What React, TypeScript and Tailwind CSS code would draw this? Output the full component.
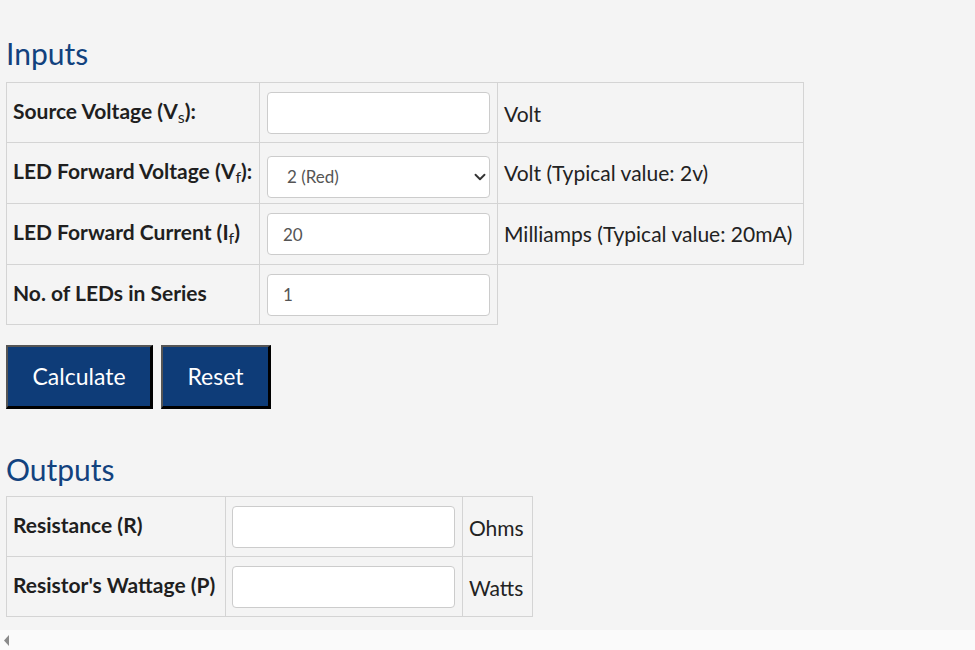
import { ChevronDown } from 'lucide-react';

const font = { fontFamily: 'Lato, "Noto Sans", sans-serif' };

const cell = 'border border-[#d4d4d4] align-middle';
const label = 'pl-[6px] pr-[5px] pb-[4px] text-[21px] font-bold text-[#1f1f1f] whitespace-nowrap';
const unit = 'px-[6px] text-[21px] text-[#222] whitespace-nowrap';
const field = 'block h-[42px] w-[223px] rounded-[4px] border border-[#cccccc] bg-white px-[15px] text-[17px] text-[#555]';

const Sub = ({ children }: { children: string }) => (
  <span className="inline-block text-[16px] font-normal leading-none translate-y-[4px]">{children}</span>
);

export default function App() {
  return (
    <div className="min-h-[650px] w-[975px] bg-[#f4f4f4] flex flex-col" style={font}>
      <div className="flex-1 pl-[6px]">
        <h2 className="mt-[35px] mb-[11px] text-[30px] leading-[36px] text-[#12427e]">Inputs</h2>

        <table className="border-collapse">
          <tbody>
            <tr className="h-[60px]">
              <td className={`${cell} ${label} w-[253px]`}>
                Source Voltage (V<Sub>s</Sub>):
              </td>
              <td className={`${cell} pl-[7px] pr-[7px] w-[238px]`}>
                <input className={field} />
              </td>
              <td className={`${cell} ${unit} w-[306px] pt-[3px]`}>Volt</td>
            </tr>
            <tr className="h-[61px]">
              <td className={`${cell} ${label}`}>
                LED Forward Voltage (V<Sub>f</Sub>):
              </td>
              <td className={`${cell} pl-[7px] pr-[7px] pt-[8px]`}>
                <div className="relative w-[223px]">
                  <select className={`${field} appearance-none pl-[19px]`} defaultValue="2">
                    <option value="2">2 (Red)</option>
                  </select>
                  <ChevronDown className="pointer-events-none absolute right-px top-[12px] h-[18px] w-[18px] text-[#333]" strokeWidth={2.5} />
                </div>
              </td>
              <td className={`${cell} ${unit}`}>Volt (Typical value: 2v)</td>
            </tr>
            <tr className="h-[61px]">
              <td className={`${cell} ${label}`}>
                LED Forward Current (I<Sub>f</Sub>)
              </td>
              <td className={`${cell} pl-[7px] pr-[7px]`}>
                <input className={field} defaultValue="20" />
              </td>
              <td className={`${cell} ${unit}`}>Milliamps (Typical value: 20mA)</td>
            </tr>
            <tr className="h-[60px]">
              <td className={`${cell} ${label}`}>No. of LEDs in Series</td>
              <td className={`${cell} pl-[7px] pr-[7px]`}>
                <input className={field} defaultValue="1" />
              </td>
            </tr>
          </tbody>
        </table>

        <div className="mt-[20px] flex gap-[8px]">
          <button className="h-[64px] w-[147px] border-2 border-t-[#555] border-l-[#555] border-b-[3px] border-r-[3px] border-b-black border-r-black bg-[#0e3c78] text-[23px] text-white">
            Calculate
          </button>
          <button className="h-[64px] w-[110px] border-2 border-t-[#555] border-l-[#555] border-b-[3px] border-r-[3px] border-b-black border-r-black bg-[#0e3c78] text-[23px] text-white">
            Reset
          </button>
        </div>

        <h2 className="mt-[42px] mb-[9px] text-[30px] leading-[36px] text-[#12427e]">Outputs</h2>

        <table className="border-collapse">
          <tbody>
            <tr className="h-[60px]">
              <td className={`${cell} ${label} w-[219px]`}>Resistance (R)</td>
              <td className={`${cell} pl-[6px] pr-[6px] w-[237px]`}>
                <input className={field} />
              </td>
              <td className={`${cell} ${unit} w-[70px] pt-[3px]`}>Ohms</td>
            </tr>
            <tr className="h-[60px]">
              <td className={`${cell} ${label}`}>Resistor's Wattage (P)</td>
              <td className={`${cell} pl-[6px] pr-[6px]`}>
                <input className={field} />
              </td>
              <td className={`${cell} ${unit} pt-[3px]`}>Watts</td>
            </tr>
          </tbody>
        </table>
      </div>

      <div className="mt-[12px] h-[20px] bg-[#fafafa] flex items-center pl-[4px]">
        <svg width="5" height="11" viewBox="0 0 5 11">
          <polygon points="5,0 5,11 0,5.5" fill="#8a8a8a" />
        </svg>
      </div>
    </div>
  );
}
